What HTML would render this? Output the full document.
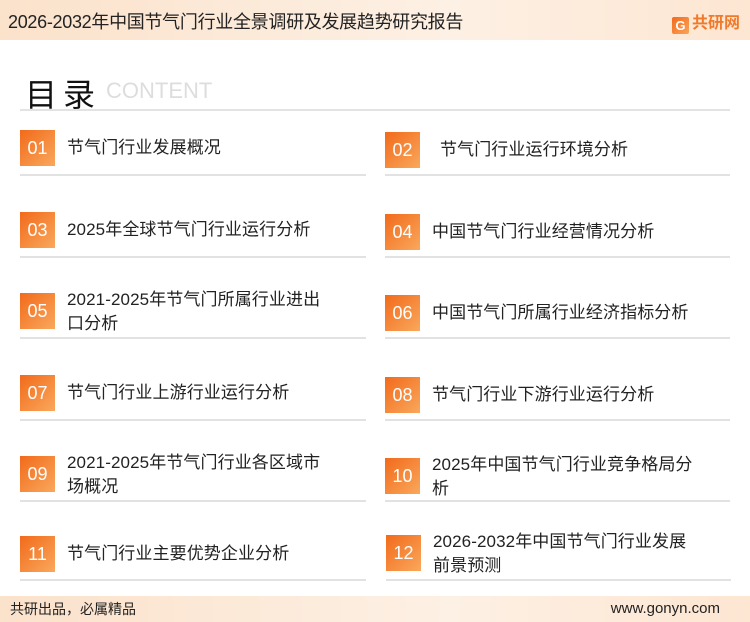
<!DOCTYPE html>
<html><head><meta charset="utf-8"><style>
*{margin:0;padding:0;box-sizing:border-box}
body{width:750px;height:622px;position:relative;background:#fff;font-family:"Liberation Sans","Noto Sans CJK SC",sans-serif;overflow:hidden;color:#222}
.hdr{position:absolute;left:0;top:0;width:750px;height:40px;background:linear-gradient(90deg,#fbe2cb,#fdf0e4 60%,#fde6d2)}
.hdr .t{position:absolute;left:8px;top:8px;font-size:18px;color:#222;letter-spacing:-0.3px}
.logo{position:absolute;right:10px;top:9px;font-size:16px;font-weight:bold;color:#f07a2a}
.logo b{display:inline-block;width:17px;height:17px;background:linear-gradient(135deg,#f26a1b,#f9a55a);border-radius:2px;color:#fff;font-size:13px;text-align:center;line-height:17px;margin-right:3px;vertical-align:-2px}
.h1{position:absolute;left:25px;top:70px;font-size:32px;color:#111;letter-spacing:6px}
.ct{position:absolute;left:106px;top:78px;font-size:22px;color:#ddd}
.hl{position:absolute;left:20px;top:109px;width:710px;height:2px;background:#e3e3e3}
.box{position:absolute;width:35px;height:36px;background:linear-gradient(135deg,#f26a1b,#f9a85c);color:#fff;font-size:18px;text-align:center;line-height:36px}
.tx{position:absolute;font-size:17px;line-height:24px;color:#222;letter-spacing:0.1px}
.dv{position:absolute;height:2px;background:#e2e2e2}
.ft{position:absolute;left:0;top:596px;width:750px;height:26px;background:linear-gradient(90deg,#fbe2cb,#fdf0e4 60%,#fde6d2);font-size:14px}
.ft .a{position:absolute;left:10px;top:3px}
.ft .b{position:absolute;right:30px;top:4px;font-size:15px}
</style></head><body>
<div class="hdr"><div class="t">2026-2032年中国节气门行业全景调研及发展趋势研究报告</div><div class="logo"><b>G</b>共研网</div></div>
<div class="h1">目录</div><div class="ct">CONTENT</div><div class="hl"></div>

<div class="box" style="left:20px;top:130px">01</div><div class="tx" style="left:67px;top:136px">节气门行业发展概况</div>
<div class="box" style="left:385px;top:132px">02</div><div class="tx" style="left:440px;top:138px">节气门行业运行环境分析</div>
<div class="dv" style="left:20px;top:174px;width:346px"></div><div class="dv" style="left:385px;top:174px;width:345px"></div>

<div class="box" style="left:20px;top:212px">03</div><div class="tx" style="left:67px;top:218px">2025年全球节气门行业运行分析</div>
<div class="box" style="left:385px;top:214px">04</div><div class="tx" style="left:432px;top:220px">中国节气门行业经营情况分析</div>
<div class="dv" style="left:20px;top:256px;width:346px"></div><div class="dv" style="left:385px;top:256px;width:345px"></div>

<div class="box" style="left:20px;top:293px">05</div><div class="tx" style="left:67px;top:288px">2021-2025年节气门所属行业进出<br>口分析</div>
<div class="box" style="left:385px;top:295px">06</div><div class="tx" style="left:432px;top:301px">中国节气门所属行业经济指标分析</div>
<div class="dv" style="left:20px;top:337px;width:346px"></div><div class="dv" style="left:385px;top:337px;width:345px"></div>

<div class="box" style="left:20px;top:375px">07</div><div class="tx" style="left:67px;top:381px">节气门行业上游行业运行分析</div>
<div class="box" style="left:385px;top:377px">08</div><div class="tx" style="left:432px;top:383px">节气门行业下游行业运行分析</div>
<div class="dv" style="left:20px;top:419px;width:346px"></div><div class="dv" style="left:385px;top:419px;width:345px"></div>

<div class="box" style="left:20px;top:456px">09</div><div class="tx" style="left:67px;top:451px">2021-2025年节气门行业各区域市<br>场概况</div>
<div class="box" style="left:385px;top:458px">10</div><div class="tx" style="left:432px;top:453px">2025年中国节气门行业竞争格局分<br>析</div>
<div class="dv" style="left:20px;top:500px;width:346px"></div><div class="dv" style="left:385px;top:500px;width:345px"></div>

<div class="box" style="left:20px;top:536px">11</div><div class="tx" style="left:67px;top:542px">节气门行业主要优势企业分析</div>
<div class="box" style="left:386px;top:535px">12</div><div class="tx" style="left:433px;top:530px">2026-2032年中国节气门行业发展<br>前景预测</div>
<div class="dv" style="left:20px;top:579px;width:346px"></div><div class="dv" style="left:386px;top:579px;width:345px"></div>

<div class="ft"><div class="a">共研出品，必属精品</div><div class="b">www.gonyn.com</div></div>
</body></html>
